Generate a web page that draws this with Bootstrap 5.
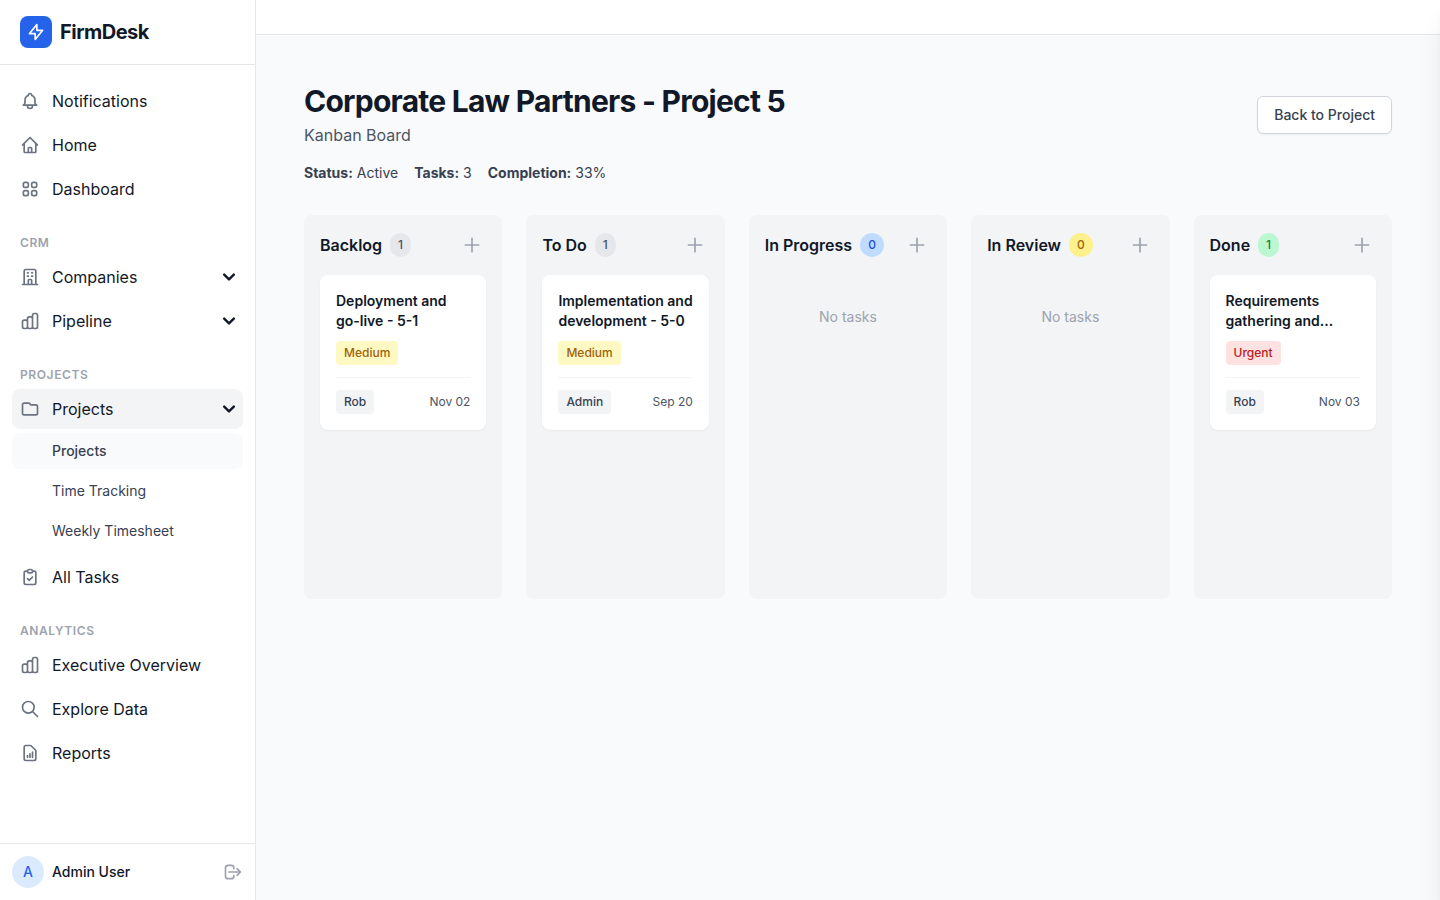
<!DOCTYPE html>
<html lang="en">
<head>
<meta charset="utf-8">
<meta name="viewport" content="width=device-width, initial-scale=1">
<title>FirmDesk – Kanban Board</title>
<link rel="stylesheet" href="https://cdn.jsdelivr.net/npm/bootstrap@5.3.0/dist/css/bootstrap.min.css">
<style>
  :root { --ink: #111827; --ink-soft: #374151; --ink-mid: #4b5563; --ink-dim: #6b7280; --ink-faint: #9ca3af; --line: #e5e7eb; --tint: #f3f4f6; --page: #f9fafb; }
  body { font-family: Inter, "Liberation Sans", sans-serif; font-size: 16px; line-height: 24px; color: var(--ink); background: var(--page); }
  svg { display: block; flex: none; }
  .ico { width: 20px; height: 20px; fill: none; stroke: currentColor; stroke-width: 2; stroke-linecap: round; stroke-linejoin: round; }

  .side { width: 256px; border-right: 1px solid var(--line); }
  .brand { padding: 16px 20px; border-bottom: 1px solid var(--line); color: var(--ink); font-size: 20px; font-weight: 700; letter-spacing: -0.025em; }
  .brand-tile { width: 32px; height: 32px; border-radius: 8px; background: #2563eb; color: #fff; }
  .side-nav { padding: 16px 12px; }
  .side-nav .nav { gap: 4px; }
  .side-link { display: flex; align-items: center; gap: 12px; width: 100%; padding: 8px; border: 0; border-radius: 8px; background: none; color: var(--ink); text-align: left; text-decoration: none; }
  .side-link .ico { color: var(--ink-dim); }
  .side-link .chev { width: 12px; height: 12px; margin-left: auto; fill: none; stroke: currentColor; stroke-width: 2; stroke-linecap: round; stroke-linejoin: round; }
  .side-link:hover, .side-link.open { background: var(--tint); }
  .side-sub { padding: 8px 8px 8px 40px; font-size: 14px; line-height: 20px; color: var(--ink-soft); }
  .side-sub.active { background: var(--page); font-weight: 500; }
  .side-head { margin: 24px 8px 4px; font-size: 12px; line-height: 20px; font-weight: 600; letter-spacing: 0.05em; text-transform: uppercase; color: var(--ink-faint); }
  .side-user { padding: 12px; border-top: 1px solid var(--line); font-size: 14px; line-height: 20px; font-weight: 500; }
  .user-dot { width: 32px; height: 32px; background: #dbeafe; color: #2563eb; }
  .bare-btn { padding: 0; border: 0; background: none; color: var(--ink-faint); }

  .pane { position: relative; overflow: hidden; }
  /* task drawer waiting past the right edge; only its shadow reaches the page */
  .pane::after { content: ""; position: absolute; top: 0; bottom: 0; left: 100%; width: 384px; box-shadow: 0 20px 25px -5px rgba(0,0,0,.1), 0 8px 10px -6px rgba(0,0,0,.1); }
  .top-strip { height: 35px; border-bottom: 1px solid var(--line); }
  .page-title { margin: 0; font-size: 30px; line-height: 36px; font-weight: 700; letter-spacing: -0.025em; }
  .page-kind { margin: 4px 0 0; color: var(--ink-mid); }
  .facts { font-size: 14px; line-height: 20px; color: var(--ink-soft); }
  .facts strong { font-weight: 700; }
  .back-btn { --bs-btn-font-size: 14px; --bs-btn-line-height: 20px; --bs-btn-font-weight: 500; --bs-btn-padding-x: 16px; --bs-btn-padding-y: 8px; --bs-btn-border-radius: 6px; --bs-btn-color: #374151; --bs-btn-bg: #fff; --bs-btn-border-color: #d1d5db; --bs-btn-hover-color: #374151; --bs-btn-hover-bg: #f9fafb; --bs-btn-hover-border-color: #d1d5db; box-shadow: 0 1px 2px rgba(0,0,0,.05); }

  .board { margin-top: 32px; }
  .lane { min-height: 384px; padding: 16px; border-radius: 8px; background: var(--tint); }
  .lane-top { height: 28px; margin-bottom: 16px; }
  .lane-name { margin: 0; font-size: 16px; line-height: 24px; font-weight: 600; }
  .pill { padding: 4px 8px; border-radius: 12px; font-size: 12px; line-height: 16px; font-weight: 500; }
  .tag { display: inline-block; padding: 4px 8px; border-radius: 4px; font-size: 12px; line-height: 16px; font-weight: 500; }
  .c-gray { background: #e5e7eb; color: #4b5563; }
  .c-blue { background: #bfdbfe; color: #1d4ed8; }
  .c-amber { background: #fef08a; color: #a16207; }
  .c-green { background: #bbf7d0; color: #15803d; }
  .c-medium { background: #fef9c3; color: #a16207; }
  .c-urgent { background: #fee2e2; color: #b91c1c; }
  .c-person { background: var(--tint); color: var(--ink-soft); }
  .add-btn { padding: 4px; }
  .task { padding: 16px; border-radius: 8px; background: #fff; box-shadow: 0 1px 2px rgba(0,0,0,.05); }
  .task-name { margin: 0 0 10px; font-size: 14px; line-height: 20px; font-weight: 600; }
  .task-foot { margin-top: 12px; padding-top: 12px; border-top: 1px solid var(--tint); font-size: 12px; line-height: 16px; color: var(--ink-mid); }
  .empty { padding: 32px 0; font-size: 14px; line-height: 20px; color: var(--ink-faint); text-align: center; }
</style>
</head>
<body>
<svg class="d-none" aria-hidden="true">
  <symbol id="i-chart" viewBox="0 0 24 24"><path d="M9 19v-6a2 2 0 00-2-2H5a2 2 0 00-2 2v6a2 2 0 002 2h2a2 2 0 002-2zm0 0V9a2 2 0 012-2h2a2 2 0 012 2v10m-6 0a2 2 0 002 2h2a2 2 0 002-2m0 0V5a2 2 0 012-2h2a2 2 0 012 2v14a2 2 0 01-2 2h-2a2 2 0 01-2-2z"/></symbol>
  <symbol id="i-chev" viewBox="0 0 10 6"><path d="m1 1 4 4 4-4"/></symbol>
  <symbol id="i-plus" viewBox="0 0 24 24"><path d="M12 4v16m8-8H4"/></symbol>
</svg>

<div class="d-flex min-vh-100">
  <aside class="side d-flex flex-column flex-shrink-0 bg-white">
    <a href="#" class="brand d-flex align-items-center gap-2 text-decoration-none">
      <span class="brand-tile d-flex align-items-center justify-content-center">
        <svg class="ico" viewBox="0 0 24 24"><path d="M13 10V3L4 14h7v7l9-11h-7z"/></svg>
      </span>
      <span>FirmDesk</span>
    </a>

    <nav class="side-nav flex-grow-1" aria-label="Main">
      <ul class="nav flex-column flex-nowrap">
        <li><a href="#" class="side-link"><svg class="ico" viewBox="0 0 24 24"><path d="M15 17h5l-1.405-1.405A2.032 2.032 0 0118 14.158V11a6.002 6.002 0 00-4-5.659V5a2 2 0 10-4 0v.341C7.67 6.165 6 8.388 6 11v3.159c0 .538-.214 1.055-.595 1.436L4 17h5m6 0v1a3 3 0 11-6 0v-1m6 0H9"/></svg>Notifications</a></li>
        <li><a href="#" class="side-link"><svg class="ico" viewBox="0 0 24 24"><path d="M3 12l2-2m0 0l7-7 7 7M5 10v10a1 1 0 001 1h3m10-11l2 2m-2-2v10a1 1 0 01-1 1h-3m-6 0a1 1 0 001-1v-4a1 1 0 011-1h2a1 1 0 011 1v4a1 1 0 001 1m-6 0h6"/></svg>Home</a></li>
        <li><a href="#" class="side-link"><svg class="ico" viewBox="0 0 24 24"><path d="M4 6a2 2 0 012-2h2a2 2 0 012 2v2a2 2 0 01-2 2H6a2 2 0 01-2-2V6zM14 6a2 2 0 012-2h2a2 2 0 012 2v2a2 2 0 01-2 2h-2a2 2 0 01-2-2V6zM4 16a2 2 0 012-2h2a2 2 0 012 2v2a2 2 0 01-2 2H6a2 2 0 01-2-2v-2zM14 16a2 2 0 012-2h2a2 2 0 012 2v2a2 2 0 01-2 2h-2a2 2 0 01-2-2v-2z"/></svg>Dashboard</a></li>
      </ul>

      <h2 class="side-head">CRM</h2>
      <ul class="nav flex-column flex-nowrap">
        <li><button type="button" class="side-link"><svg class="ico" viewBox="0 0 24 24"><path d="M19 21V5a2 2 0 00-2-2H7a2 2 0 00-2 2v16m14 0h2m-2 0h-5m-9 0H3m2 0h5M9 7h1m-1 4h1m4-4h1m-1 4h1m-5 10v-5a1 1 0 011-1h2a1 1 0 011 1v5m-4 0h4"/></svg>Companies<svg class="chev"><use href="#i-chev"/></svg></button></li>
        <li><button type="button" class="side-link"><svg class="ico"><use href="#i-chart"/></svg>Pipeline<svg class="chev"><use href="#i-chev"/></svg></button></li>
      </ul>

      <h2 class="side-head">Projects</h2>
      <ul class="nav flex-column flex-nowrap">
        <li><button type="button" class="side-link open" aria-expanded="true"><svg class="ico" viewBox="0 0 24 24"><path d="M3 7v10a2 2 0 002 2h14a2 2 0 002-2V9a2 2 0 00-2-2h-6l-2-2H5a2 2 0 00-2 2z"/></svg>Projects<svg class="chev"><use href="#i-chev"/></svg></button></li>
        <li class="pb-1">
          <ul class="nav flex-column flex-nowrap">
            <li><a href="#" class="side-link side-sub active" aria-current="page">Projects</a></li>
            <li><a href="#" class="side-link side-sub">Time Tracking</a></li>
            <li><a href="#" class="side-link side-sub">Weekly Timesheet</a></li>
          </ul>
        </li>
        <li><a href="#" class="side-link"><svg class="ico" viewBox="0 0 24 24"><path d="M9 5H7a2 2 0 00-2 2v12a2 2 0 002 2h10a2 2 0 002-2V7a2 2 0 00-2-2h-2M9 5a2 2 0 002 2h2a2 2 0 002-2M9 5a2 2 0 012-2h2a2 2 0 012 2m-6 9l2 2 4-4"/></svg>All Tasks</a></li>
      </ul>

      <h2 class="side-head">Analytics</h2>
      <ul class="nav flex-column flex-nowrap">
        <li><a href="#" class="side-link"><svg class="ico"><use href="#i-chart"/></svg>Executive Overview</a></li>
        <li><a href="#" class="side-link"><svg class="ico" viewBox="0 0 24 24"><path d="M21 21l-6-6m2-5a7 7 0 11-14 0 7 7 0 0114 0z"/></svg>Explore Data</a></li>
        <li><a href="#" class="side-link"><svg class="ico" viewBox="0 0 24 24"><path d="M9 17v-2m3 2v-4m3 4v-6m2 10H7a2 2 0 01-2-2V5a2 2 0 012-2h5.586a1 1 0 01.707.293l5.414 5.414a1 1 0 01.293.707V19a2 2 0 01-2 2z"/></svg>Reports</a></li>
      </ul>
    </nav>

    <div class="side-user d-flex align-items-center gap-2">
      <span class="user-dot rounded-circle d-flex align-items-center justify-content-center">A</span>
      <span>Admin User</span>
      <button type="button" class="bare-btn ms-auto" aria-label="Log out"><svg class="ico" viewBox="0 0 24 24"><path d="M17 16l4-4m0 0l-4-4m4 4H7m6 4v1a3 3 0 01-3 3H6a3 3 0 01-3-3V7a3 3 0 013-3h4a3 3 0 013 3v1"/></svg></button>
    </div>
  </aside>

  <div class="pane flex-grow-1">
    <div class="top-strip bg-white"></div>
    <main class="p-5">
      <header class="d-flex align-items-center justify-content-between">
        <div>
          <h1 class="page-title">Corporate Law Partners - Project 5</h1>
          <p class="page-kind">Kanban Board</p>
        </div>
        <button type="button" class="btn back-btn">Back to Project</button>
      </header>
      <div class="facts d-flex gap-3 mt-3">
        <span><strong>Status:</strong> Active</span>
        <span><strong>Tasks:</strong> 3</span>
        <span><strong>Completion:</strong> 33%</span>
      </div>

      <div class="board row row-cols-5 gx-4">
        <section class="col">
          <div class="lane">
            <div class="lane-top d-flex align-items-center gap-2">
              <h2 class="lane-name">Backlog</h2><span class="pill c-gray">1</span>
              <button type="button" class="bare-btn add-btn ms-auto" aria-label="Add task to Backlog"><svg class="ico"><use href="#i-plus"/></svg></button>
            </div>
            <article class="task">
              <h3 class="task-name">Deployment and go-live - 5-1</h3>
              <div class="d-flex"><span class="tag c-medium">Medium</span></div>
              <div class="task-foot d-flex align-items-center justify-content-between"><span class="tag c-person">Rob</span><span>Nov 02</span></div>
            </article>
          </div>
        </section>
        <section class="col">
          <div class="lane">
            <div class="lane-top d-flex align-items-center gap-2">
              <h2 class="lane-name">To Do</h2><span class="pill c-gray">1</span>
              <button type="button" class="bare-btn add-btn ms-auto" aria-label="Add task to To Do"><svg class="ico"><use href="#i-plus"/></svg></button>
            </div>
            <article class="task">
              <h3 class="task-name">Implementation and development - 5-0</h3>
              <div class="d-flex"><span class="tag c-medium">Medium</span></div>
              <div class="task-foot d-flex align-items-center justify-content-between"><span class="tag c-person">Admin</span><span>Sep 20</span></div>
            </article>
          </div>
        </section>
        <section class="col">
          <div class="lane">
            <div class="lane-top d-flex align-items-center gap-2">
              <h2 class="lane-name">In Progress</h2><span class="pill c-blue">0</span>
              <button type="button" class="bare-btn add-btn ms-auto" aria-label="Add task to In Progress"><svg class="ico"><use href="#i-plus"/></svg></button>
            </div>
            <div class="empty">No tasks</div>
          </div>
        </section>
        <section class="col">
          <div class="lane">
            <div class="lane-top d-flex align-items-center gap-2">
              <h2 class="lane-name">In Review</h2><span class="pill c-amber">0</span>
              <button type="button" class="bare-btn add-btn ms-auto" aria-label="Add task to In Review"><svg class="ico"><use href="#i-plus"/></svg></button>
            </div>
            <div class="empty">No tasks</div>
          </div>
        </section>
        <section class="col">
          <div class="lane">
            <div class="lane-top d-flex align-items-center gap-2">
              <h2 class="lane-name">Done</h2><span class="pill c-green">1</span>
              <button type="button" class="bare-btn add-btn ms-auto" aria-label="Add task to Done"><svg class="ico"><use href="#i-plus"/></svg></button>
            </div>
            <article class="task">
              <h3 class="task-name">Requirements gathering and...</h3>
              <div class="d-flex"><span class="tag c-urgent">Urgent</span></div>
              <div class="task-foot d-flex align-items-center justify-content-between"><span class="tag c-person">Rob</span><span>Nov 03</span></div>
            </article>
          </div>
        </section>
      </div>
    </main>
  </div>
</div>
<script src="https://cdn.jsdelivr.net/npm/bootstrap@5.3.0/dist/js/bootstrap.bundle.min.js"></script>
</body>
</html>
